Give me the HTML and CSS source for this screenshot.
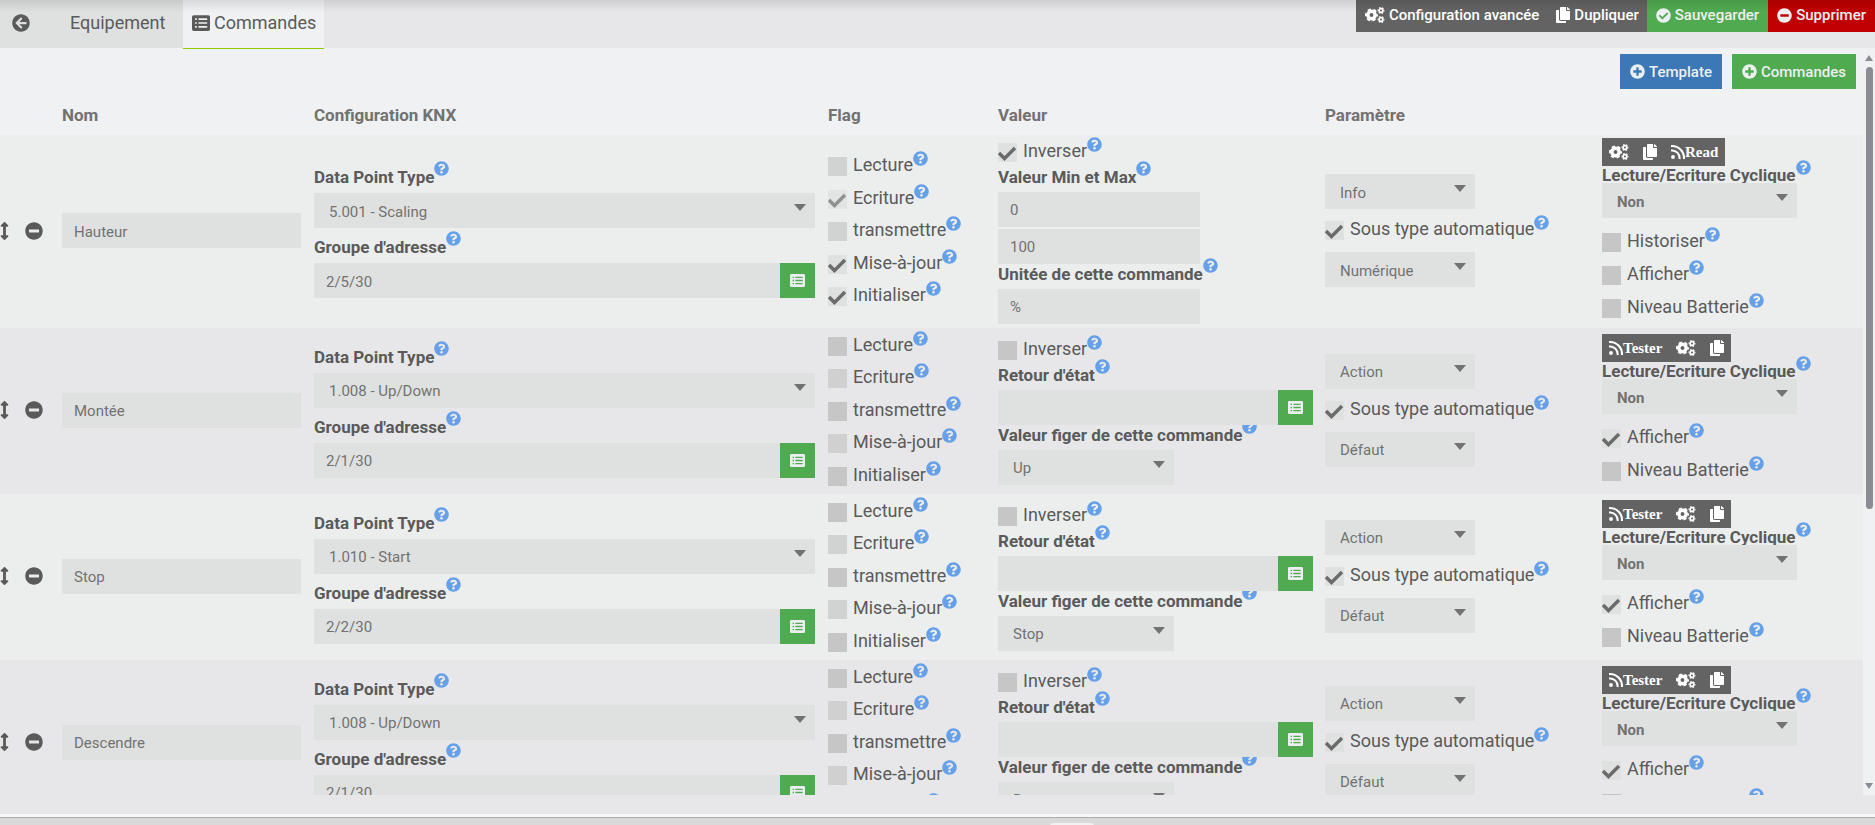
FILE: index.html
```
<!DOCTYPE html>
<html lang="fr">
<head>
    <meta charset="UTF-8">
    <meta name="viewport" content="width=device-width, initial-scale=1.0">
    <title>Commandes KNX</title>
    <link rel="stylesheet" href="styles.css">
</head>
<body>
    <svg class="sprite" aria-hidden="true">
        <symbol id="help" viewBox="0 0 512 512"><path d="M504 256c0 136.997-111.043 248-248 248S8 392.997 8 256C8 119.083 119.043 8 256 8s248 111.083 248 248zM262.655 90c-54.497 0-89.255 22.957-116.549 63.758-3.536 5.286-2.353 12.415 2.715 16.258l34.699 26.31c5.205 3.947 12.621 3.008 16.665-2.122 17.864-22.658 30.113-35.797 57.303-35.797 20.429 0 45.698 13.148 45.698 32.958 0 14.976-12.363 22.667-32.534 33.976C247.128 238.528 216 254.941 216 296v4c0 6.627 5.373 12 12 12h56c6.627 0 12-5.373 12-12v-1.333c0-28.462 83.186-29.647 83.186-106.667 0-58.002-60.165-102-116.531-102zM256 338c-25.365 0-46 20.635-46 46 0 25.364 20.635 46 46 46s46-20.636 46-46c0-25.365-20.635-46-46-46z"/></symbol>
        <symbol id="ok" viewBox="0 0 512 512"><path d="M504 256c0 136.967-111.033 248-248 248S8 392.967 8 256 119.033 8 256 8s248 111.033 248 248zM227.314 387.314l184-184c6.248-6.248 6.248-16.379 0-22.627l-22.627-22.627c-6.248-6.249-16.379-6.249-22.628 0L216 308.118l-70.059-70.059c-6.248-6.248-16.379-6.248-22.628 0l-22.627 22.627c-6.248 6.248-6.248 16.379 0 22.627l104 104c6.249 6.249 16.379 6.249 22.628.001z"/></symbol>
        <symbol id="minus" viewBox="0 0 512 512"><path d="M256 8C119 8 8 119 8 256s111 248 248 248 248-111 248-248S393 8 256 8zM124 296c-6.600 0-12-5.400-12-12v-56c0-6.600 5.400-12 12-12h264c6.600 0 12 5.400 12 12v56c0 6.600-5.400 12-12 12H124z"/></symbol>
        <symbol id="plus" viewBox="0 0 512 512"><path d="M256 8C119 8 8 119 8 256s111 248 248 248 248-111 248-248S393 8 256 8zm144 276c0 6.600-5.400 12-12 12h-92v92c0 6.600-5.400 12-12 12h-56c-6.600 0-12-5.400-12-12v-92h-92c-6.600 0-12-5.400-12-12v-56c0-6.600 5.400-12 12-12h92v-92c0-6.600 5.400-12 12-12h56c6.600 0 12 5.400 12 12v92h92c6.600 0 12 5.400 12 12v56z"/></symbol>
        <symbol id="back" viewBox="0 0 512 512"><path d="M256 504C119 504 8 393 8 256S119 8 256 8s248 111 248 248-111 248-248 248zm28.900-143.600L209.400 288H392c13.300 0 24-10.700 24-24v-16c0-13.300-10.700-24-24-24H209.400l75.500-72.400c9.700-9.300 9.900-24.800.4-34.300l-11-10.900c-9.400-9.400-24.600-9.400-33.900 0L107.700 239c-9.400 9.400-9.400 24.600 0 33.900l132.700 132.700c9.400 9.400 24.600 9.400 33.900 0l11-10.900c9.500-9.500 9.300-25-.4-34.300z"/></symbol>
        <symbol id="move" viewBox="0 0 256 512"><path d="M214.059 377.941H168V134.059h46.059c21.382 0 32.090-25.851 16.971-40.971L144.971 7.029c-9.373-9.373-24.568-9.373-33.941 0L24.971 93.088c-15.119 15.119-4.411 40.971 16.971 40.971H88v243.882H41.941c-21.382 0-32.090 25.851-16.971 40.971l86.059 86.059c9.373 9.373 24.568 9.373 33.941 0l86.059-86.059c15.120-15.119 4.412-40.971-16.970-40.971z"/></symbol>
        <symbol id="copy" viewBox="0 0 448 512"><path d="M320 448v40c0 13.255-10.745 24-24 24H24c-13.255 0-24-10.745-24-24V120c0-13.255 10.745-24 24-24h72v296c0 30.879 25.121 56 56 56h168zm0-344V0H152c-13.255 0-24 10.745-24 24v368c0 13.255 10.745 24 24 24h272c13.255 0 24-10.745 24-24V128H344c-13.200 0-24-10.800-24-24zm120.971-31.029L375.029 7.029A24 24 0 0 0 358.059 0H352v96h96v-6.059a24 24 0 0 0-7.029-16.970z"/></symbol>
        <symbol id="list" viewBox="0 0 512 512"><path fill-rule="evenodd" d="M48 32h416a48 48 0 0 1 48 48v352a48 48 0 0 1-48 48H48a48 48 0 0 1-48-48V80a48 48 0 0 1 48-48zM88 124v48h48v-48zM88 232v48h48v-48zM88 340v48h48v-48zM184 124v48h248v-48zM184 232v48h248v-48zM184 340v48h248v-48z"/></symbol>
        <symbol id="rss" viewBox="0 0 448 512"><circle cx="64" cy="416" r="62"/><path fill="none" stroke="currentColor" stroke-width="66" d="M0 208A240 240 0 0 1 272 480M0 66A382 382 0 0 1 414 480"/></symbol>
        <symbol id="cogs" viewBox="0 0 640 512">
            <g fill="none" stroke="currentColor">
                <circle cx="208" cy="256" r="118" stroke-width="110"/>
                <circle cx="208" cy="256" r="182" stroke-width="56" stroke-dasharray="104 86.600" stroke-dashoffset="52"/>
                <circle cx="512" cy="112" r="60" stroke-width="52"/>
                <circle cx="512" cy="112" r="94" stroke-width="34" stroke-dasharray="54 44.430" stroke-dashoffset="27"/>
                <circle cx="512" cy="400" r="60" stroke-width="52"/>
                <circle cx="512" cy="400" r="94" stroke-width="34" stroke-dasharray="54 44.430" stroke-dashoffset="27"/>
            </g>
        </symbol>
    </svg>

    <header class="topbar">
        <nav class="tabs">
            <a href="#" class="tab tab-back" aria-label="Retour"><svg class="icon18"><use href="#back"/></svg></a>
            <a href="#" class="tab tab-equip">Equipement</a>
            <a href="#" class="tab tab-cmd active"><svg class="icon18"><use href="#list"/></svg>Commandes</a>
        </nav>
        <div class="actions">
            <button type="button" class="btn btn-dark"><svg class="cogs"><use href="#cogs"/></svg>Configuration avancée</button>
            <button type="button" class="btn btn-dark"><svg class="copy"><use href="#copy"/></svg>Dupliquer</button>
            <button type="button" class="btn btn-green"><svg class="icon15"><use href="#ok"/></svg>Sauvegarder</button>
            <button type="button" class="btn btn-red"><svg class="icon15"><use href="#minus"/></svg>Supprimer</button>
        </div>
    </header>

    <main class="panel">
        <div class="content">
            <div class="add-bar">
                <button type="button" class="btn btn-blue"><svg class="icon15"><use href="#plus"/></svg>Template</button>
                <button type="button" class="btn btn-green"><svg class="icon15"><use href="#plus"/></svg>Commandes</button>
            </div>

            <table class="cmd-table">
                <thead>
                    <tr>
                        <th class="col-move"></th>
                        <th class="col-name">Nom</th>
                        <th>Configuration KNX</th>
                        <th class="col-flag">Flag</th>
                        <th class="col-value">Valeur</th>
                        <th class="col-param">Paramètre</th>
                        <th class="col-action"></th>
                    </tr>
                </thead>
                <tbody>
                    <!-- Hauteur -->
                    <tr>
                        <td class="move"><div class="handles"><svg class="arrows"><use href="#move"/></svg><svg class="icon18"><use href="#minus"/></svg></div></td>
                        <td class="name"><input type="text" class="field" value="Hauteur" aria-label="Nom"></td>
                        <td class="config">
                            <label class="title spaced" for="dpt1">Data Point Type<svg class="help"><use href="#help"/></svg></label>
                            <select class="field" id="dpt1"><option>5.001 - Scaling</option></select>
                            <label class="title spaced" for="ga1">Groupe d'adresse<svg class="help"><use href="#help"/></svg></label>
                            <div class="group"><input type="text" class="field" id="ga1" value="2/5/30"><button type="button" class="pick" aria-label="Choisir"><svg class="icon15"><use href="#list"/></svg></button></div>
                        </td>
                        <td>
                            <div class="flags">
                                <label class="check"><input type="checkbox" disabled>Lecture<svg class="help"><use href="#help"/></svg></label>
                                <label class="check"><input type="checkbox" checked disabled>Ecriture<svg class="help"><use href="#help"/></svg></label>
                                <label class="check"><input type="checkbox" disabled>transmettre<svg class="help"><use href="#help"/></svg></label>
                                <label class="check"><input type="checkbox" checked>Mise-à-jour<svg class="help"><use href="#help"/></svg></label>
                                <label class="check"><input type="checkbox" checked>Initialiser<svg class="help"><use href="#help"/></svg></label>
                            </div>
                        </td>
                        <td class="value">
                            <label class="check invert"><input type="checkbox" checked>Inverser<svg class="help"><use href="#help"/></svg></label>
                            <label class="title" for="min1">Valeur Min et Max<svg class="help"><use href="#help"/></svg></label>
                            <div class="range">
                                <input type="text" class="field short" id="min1" value="0">
                                <input type="text" class="field short" value="100" aria-label="Valeur Max">
                            </div>
                            <label class="title" for="unit1">Unitée de cette commande<svg class="help"><use href="#help"/></svg></label>
                            <input type="text" class="field short" id="unit1" value="%">
                        </td>
                        <td class="param">
                            <div class="params">
                                <select class="field type" aria-label="Type"><option>Info</option></select>
                                <label class="check"><input type="checkbox" checked>Sous type automatique<svg class="help"><use href="#help"/></svg></label>
                                <select class="field type" aria-label="Sous type"><option>Numérique</option></select>
                            </div>
                        </td>
                        <td>
                            <div class="tools">
                                <button type="button" class="tool" aria-label="Configurer"><svg class="cogs"><use href="#cogs"/></svg></button>
                                <button type="button" class="tool" aria-label="Dupliquer"><svg class="copy"><use href="#copy"/></svg></button>
                                <button type="button" class="tool"><svg class="copy"><use href="#rss"/></svg>Read</button>
                            </div>
                            <label class="title tight" for="cycle1">Lecture/Ecriture Cyclique<svg class="help"><use href="#help"/></svg></label>
                            <select class="field cycle" id="cycle1"><option>Non</option></select>
                            <div class="options">
                                <label class="check"><input type="checkbox">Historiser<svg class="help"><use href="#help"/></svg></label>
                                <label class="check"><input type="checkbox">Afficher<svg class="help"><use href="#help"/></svg></label>
                                <label class="check"><input type="checkbox">Niveau Batterie<svg class="help"><use href="#help"/></svg></label>
                            </div>
                        </td>
                    </tr>

                    <!-- Montée -->
                    <tr>
                        <td class="move"><div class="handles"><svg class="arrows"><use href="#move"/></svg><svg class="icon18"><use href="#minus"/></svg></div></td>
                        <td class="name"><input type="text" class="field" value="Montée" aria-label="Nom"></td>
                        <td class="config">
                            <label class="title spaced" for="dpt2">Data Point Type<svg class="help"><use href="#help"/></svg></label>
                            <select class="field" id="dpt2"><option>1.008 - Up/Down</option></select>
                            <label class="title spaced" for="ga2">Groupe d'adresse<svg class="help"><use href="#help"/></svg></label>
                            <div class="group"><input type="text" class="field" id="ga2" value="2/1/30"><button type="button" class="pick" aria-label="Choisir"><svg class="icon15"><use href="#list"/></svg></button></div>
                        </td>
                        <td>
                            <div class="flags">
                                <label class="check"><input type="checkbox">Lecture<svg class="help"><use href="#help"/></svg></label>
                                <label class="check"><input type="checkbox" disabled>Ecriture<svg class="help"><use href="#help"/></svg></label>
                                <label class="check"><input type="checkbox">transmettre<svg class="help"><use href="#help"/></svg></label>
                                <label class="check"><input type="checkbox" disabled>Mise-à-jour<svg class="help"><use href="#help"/></svg></label>
                                <label class="check"><input type="checkbox">Initialiser<svg class="help"><use href="#help"/></svg></label>
                            </div>
                        </td>
                        <td class="value">
                            <label class="check invert"><input type="checkbox">Inverser<svg class="help"><use href="#help"/></svg></label>
                            <label class="title" for="state2">Retour d'état<svg class="help"><use href="#help"/></svg></label>
                            <div class="group"><input type="text" class="field" id="state2"><button type="button" class="pick" aria-label="Choisir"><svg class="icon15"><use href="#list"/></svg></button></div>
                            <label class="title clipped" for="fixed2">Valeur figer de cette commande<svg class="help"><use href="#help"/></svg></label>
                            <select class="field fixed" id="fixed2"><option>Up</option></select>
                        </td>
                        <td class="param">
                            <div class="params">
                                <select class="field type" aria-label="Type"><option>Action</option></select>
                                <label class="check"><input type="checkbox" checked>Sous type automatique<svg class="help"><use href="#help"/></svg></label>
                                <select class="field type" aria-label="Sous type"><option>Défaut</option></select>
                            </div>
                        </td>
                        <td>
                            <div class="tools">
                                <button type="button" class="tool"><svg class="copy"><use href="#rss"/></svg>Tester</button>
                                <button type="button" class="tool" aria-label="Configurer"><svg class="cogs"><use href="#cogs"/></svg></button>
                                <button type="button" class="tool" aria-label="Dupliquer"><svg class="copy"><use href="#copy"/></svg></button>
                            </div>
                            <label class="title tight" for="cycle2">Lecture/Ecriture Cyclique<svg class="help"><use href="#help"/></svg></label>
                            <select class="field cycle" id="cycle2"><option>Non</option></select>
                            <div class="options">
                                <label class="check"><input type="checkbox" checked>Afficher<svg class="help"><use href="#help"/></svg></label>
                                <label class="check"><input type="checkbox">Niveau Batterie<svg class="help"><use href="#help"/></svg></label>
                            </div>
                        </td>
                    </tr>

                    <!-- Stop -->
                    <tr>
                        <td class="move"><div class="handles"><svg class="arrows"><use href="#move"/></svg><svg class="icon18"><use href="#minus"/></svg></div></td>
                        <td class="name"><input type="text" class="field" value="Stop" aria-label="Nom"></td>
                        <td class="config">
                            <label class="title spaced" for="dpt3">Data Point Type<svg class="help"><use href="#help"/></svg></label>
                            <select class="field" id="dpt3"><option>1.010 - Start</option></select>
                            <label class="title spaced" for="ga3">Groupe d'adresse<svg class="help"><use href="#help"/></svg></label>
                            <div class="group"><input type="text" class="field" id="ga3" value="2/2/30"><button type="button" class="pick" aria-label="Choisir"><svg class="icon15"><use href="#list"/></svg></button></div>
                        </td>
                        <td>
                            <div class="flags">
                                <label class="check"><input type="checkbox">Lecture<svg class="help"><use href="#help"/></svg></label>
                                <label class="check"><input type="checkbox" disabled>Ecriture<svg class="help"><use href="#help"/></svg></label>
                                <label class="check"><input type="checkbox">transmettre<svg class="help"><use href="#help"/></svg></label>
                                <label class="check"><input type="checkbox" disabled>Mise-à-jour<svg class="help"><use href="#help"/></svg></label>
                                <label class="check"><input type="checkbox">Initialiser<svg class="help"><use href="#help"/></svg></label>
                            </div>
                        </td>
                        <td class="value">
                            <label class="check invert"><input type="checkbox">Inverser<svg class="help"><use href="#help"/></svg></label>
                            <label class="title" for="state3">Retour d'état<svg class="help"><use href="#help"/></svg></label>
                            <div class="group"><input type="text" class="field" id="state3"><button type="button" class="pick" aria-label="Choisir"><svg class="icon15"><use href="#list"/></svg></button></div>
                            <label class="title clipped" for="fixed3">Valeur figer de cette commande<svg class="help"><use href="#help"/></svg></label>
                            <select class="field fixed" id="fixed3"><option>Stop</option></select>
                        </td>
                        <td class="param">
                            <div class="params">
                                <select class="field type" aria-label="Type"><option>Action</option></select>
                                <label class="check"><input type="checkbox" checked>Sous type automatique<svg class="help"><use href="#help"/></svg></label>
                                <select class="field type" aria-label="Sous type"><option>Défaut</option></select>
                            </div>
                        </td>
                        <td>
                            <div class="tools">
                                <button type="button" class="tool"><svg class="copy"><use href="#rss"/></svg>Tester</button>
                                <button type="button" class="tool" aria-label="Configurer"><svg class="cogs"><use href="#cogs"/></svg></button>
                                <button type="button" class="tool" aria-label="Dupliquer"><svg class="copy"><use href="#copy"/></svg></button>
                            </div>
                            <label class="title tight" for="cycle3">Lecture/Ecriture Cyclique<svg class="help"><use href="#help"/></svg></label>
                            <select class="field cycle" id="cycle3"><option>Non</option></select>
                            <div class="options">
                                <label class="check"><input type="checkbox" checked>Afficher<svg class="help"><use href="#help"/></svg></label>
                                <label class="check"><input type="checkbox">Niveau Batterie<svg class="help"><use href="#help"/></svg></label>
                            </div>
                        </td>
                    </tr>

                    <!-- Descendre -->
                    <tr>
                        <td class="move"><div class="handles"><svg class="arrows"><use href="#move"/></svg><svg class="icon18"><use href="#minus"/></svg></div></td>
                        <td class="name"><input type="text" class="field" value="Descendre" aria-label="Nom"></td>
                        <td class="config">
                            <label class="title spaced" for="dpt4">Data Point Type<svg class="help"><use href="#help"/></svg></label>
                            <select class="field" id="dpt4"><option>1.008 - Up/Down</option></select>
                            <label class="title spaced" for="ga4">Groupe d'adresse<svg class="help"><use href="#help"/></svg></label>
                            <div class="group"><input type="text" class="field" id="ga4" value="2/1/30"><button type="button" class="pick" aria-label="Choisir"><svg class="icon15"><use href="#list"/></svg></button></div>
                        </td>
                        <td>
                            <div class="flags">
                                <label class="check"><input type="checkbox">Lecture<svg class="help"><use href="#help"/></svg></label>
                                <label class="check"><input type="checkbox" disabled>Ecriture<svg class="help"><use href="#help"/></svg></label>
                                <label class="check"><input type="checkbox">transmettre<svg class="help"><use href="#help"/></svg></label>
                                <label class="check"><input type="checkbox" disabled>Mise-à-jour<svg class="help"><use href="#help"/></svg></label>
                                <label class="check"><input type="checkbox">Initialiser<svg class="help"><use href="#help"/></svg></label>
                            </div>
                        </td>
                        <td class="value">
                            <label class="check invert"><input type="checkbox">Inverser<svg class="help"><use href="#help"/></svg></label>
                            <label class="title" for="state4">Retour d'état<svg class="help"><use href="#help"/></svg></label>
                            <div class="group"><input type="text" class="field" id="state4"><button type="button" class="pick" aria-label="Choisir"><svg class="icon15"><use href="#list"/></svg></button></div>
                            <label class="title clipped" for="fixed4">Valeur figer de cette commande<svg class="help"><use href="#help"/></svg></label>
                            <select class="field fixed" id="fixed4"><option>Down</option></select>
                        </td>
                        <td class="param">
                            <div class="params">
                                <select class="field type" aria-label="Type"><option>Action</option></select>
                                <label class="check"><input type="checkbox" checked>Sous type automatique<svg class="help"><use href="#help"/></svg></label>
                                <select class="field type" aria-label="Sous type"><option>Défaut</option></select>
                            </div>
                        </td>
                        <td>
                            <div class="tools">
                                <button type="button" class="tool"><svg class="copy"><use href="#rss"/></svg>Tester</button>
                                <button type="button" class="tool" aria-label="Configurer"><svg class="cogs"><use href="#cogs"/></svg></button>
                                <button type="button" class="tool" aria-label="Dupliquer"><svg class="copy"><use href="#copy"/></svg></button>
                            </div>
                            <label class="title tight" for="cycle4">Lecture/Ecriture Cyclique<svg class="help"><use href="#help"/></svg></label>
                            <select class="field cycle" id="cycle4"><option>Non</option></select>
                            <div class="options">
                                <label class="check"><input type="checkbox" checked>Afficher<svg class="help"><use href="#help"/></svg></label>
                                <label class="check"><input type="checkbox">Niveau Batterie<svg class="help"><use href="#help"/></svg></label>
                            </div>
                        </td>
                    </tr>
                </tbody>
            </table>
        </div>
        <div class="scrollbar">
            <span class="arrow-up"></span>
            <span class="thumb"></span>
            <span class="arrow-down"></span>
        </div>
    </main>

    <footer class="bottom">
        <div class="taskbar"><span class="taskbar-item"></span></div>
    </footer>
</body>
</html>
```
FILE: styles.css
```
* {
    box-sizing: border-box;
}
body {
    margin: 0;
    height: 100vh;
    display: flex;
    flex-direction: column;
    overflow: hidden;
    font-family: Roboto, "Liberation Sans", sans-serif;
    font-size: 18px;
    color: #5a5a5a;
    background-color: #e7e7e9;
}
svg {
    fill: currentColor;
    flex: none;
    display: block;
}
.sprite {
    position: absolute;
    width: 0;
    height: 0;
}
.icon15 {
    width: 15px;
    height: 15px;
}
.icon18 {
    width: 18px;
    height: 18px;
}
.cogs {
    width: 20px;
    height: 16px;
}
.copy {
    width: 14px;
    height: 16px;
}

/* top bar */
.topbar {
    position: relative;
    height: 48px;
    flex: none;
    display: flex;
    justify-content: space-between;
    align-items: flex-start;
    background-image: linear-gradient(rgba(0,0,0,0.1), rgba(0,0,0,0) 12px);
}
.tabs {
    display: flex;
}
.tab {
    height: 48px;
    display: flex;
    align-items: center;
    gap: 4px;
    padding-bottom: 3px;
    color: #5a5a5a;
    text-decoration: none;
    background: linear-gradient(rgba(0,0,0,0.1), rgba(0,0,0,0) 12px) #dfe1e0;
}
.tab-back {
    padding-left: 12px;
    width: 48px;
}
.tab-equip {
    padding-left: 22px;
    width: 135px;
}
.tab-cmd {
    padding-left: 9px;
    padding-right: 8px;
}
.tab.active {
    height: 49px;
    border-bottom: 1px solid #94ca02;
    background-color: #eff1f3;
}
.actions {
    display: flex;
    height: 32px;
}
.btn {
    height: 100%;
    display: flex;
    align-items: center;
    gap: 4px;
    padding: 0 9px;
    border: none;
    color: #eceff1;
    font-family: inherit;
    font-size: 15px;
    font-weight: 500;
    cursor: pointer;
}
.actions .btn {
    padding-bottom: 2px;
    background-image: linear-gradient(rgba(0,0,0,0.1), rgba(0,0,0,0) 12px);
}
.btn-dark {
    padding-right: 8px;
    background-color: #636363;
    color: #fff;
}
.btn-green {
    background-color: #50aa50;
}
.btn-red {
    background-color: #c00000;
}
.btn-blue {
    background-color: #3b78b5;
}

/* scrolling panel */
.panel {
    flex: 1;
    min-height: 0;
    display: flex;
    overflow: hidden;
    background-color: #eff1f3;
}
.content {
    flex: 1;
}
.add-bar {
    height: 49px;
    display: flex;
    justify-content: flex-end;
    gap: 10px;
    padding: 6px 7px 8px;
}
.add-bar .btn {
    padding: 0 10px;
}
.scrollbar {
    width: 12px;
    display: flex;
    flex-direction: column;
    align-items: center;
    padding: 7px 0 6px;
}
.arrow-up, .arrow-down {
    border: 4px solid transparent;
    border-top: none;
    border-bottom: 6px solid #8b8b94;
}
.arrow-down {
    border-bottom: none;
    border-top: 6px solid #8b8b94;
    margin-top: auto;
}
.thumb {
    width: 7px;
    height: 442px;
    margin-top: 6px;
    border-radius: 4px;
    background-color: #8b8b94;
}

/* command table */
.cmd-table {
    width: 100%;
    table-layout: fixed;
    border-collapse: collapse;
}
th {
    height: 38px;
    padding: 0 6px 2px 7px;
    text-align: left;
    font-size: 17px;
    font-weight: bold;
    color: #727272;
}
.col-move {
    width: 55px;
}
.col-name {
    width: 252px;
}
.col-flag {
    width: 170px;
}
.col-value {
    width: 327px;
}
.col-param {
    width: 277px;
}
.col-action {
    width: 268px;
}
td {
    height: 166px;
    padding: 3px 6px 3px 7px;
    vertical-align: middle;
}
tbody tr {
    background-color: #e7e7e9;
}
tbody tr:nth-child(odd) {
    background-color: #eceeed;
}
td.move {
    padding: 0 0 2px;
}
td.name, td.param {
    padding-bottom: 5px;
}
td.config {
    padding-top: 0;
    padding-bottom: 7px;
}
td.value {
    padding-top: 6px;
    padding-right: 5px;
}
.handles {
    display: flex;
    align-items: center;
    gap: 16px;
}
.arrows {
    width: 9px;
    height: 18px;
}

/* fields */
.field {
    display: block;
    width: 100%;
    height: 35px;
    padding: 2px 12px 0;
    border: none;
    border-radius: 0;
    background-color: #dfe1e0;
    color: #727272;
    font-family: inherit;
    font-size: 15px;
}
select.field {
    appearance: none;
    padding-left: 15px;
    background-image: url("data:image/svg+xml,%3Csvg xmlns='http://www.w3.org/2000/svg' width='12' height='7'%3E%3Cpath d='M0 0h12L6 7z' fill='%23727272'/%3E%3C/svg%3E");
    background-repeat: no-repeat;
    background-position: right 9px top 11px;
}
.field.short {
    width: 202px;
}
.field.fixed {
    width: 176px;
}
.field.type {
    width: 150px;
}
.field.cycle {
    position: relative;
    width: 195px;
    font-weight: bold;
}
.group {
    display: flex;
}
.pick {
    width: 35px;
    height: 35px;
    flex: none;
    display: flex;
    align-items: center;
    justify-content: center;
    padding: 0;
    border: none;
    color: #eceff1;
    background-color: #50aa50;
}
.range {
    display: grid;
    gap: 2px;
}

/* labels and check boxes */
.title {
    display: flex;
    height: 25px;
    line-height: 20px;
    font-size: 17px;
    font-weight: bold;
    white-space: nowrap;
}
.title.spaced {
    height: 35px;
    padding-top: 9px;
}
.title.tight {
    height: 17px;
    line-height: 18px;
}
.title.clipped {
    overflow: hidden;
}
.help {
    width: 15px;
    height: 15px;
    margin-top: -6px;
    color: #65a0e8;
}
.check {
    display: flex;
    height: 19px;
    line-height: 15px;
    white-space: nowrap;
}
.check input {
    appearance: none;
    width: 19px;
    height: 19px;
    flex: none;
    margin: 0 6px 0 0;
    background-color: #c6c6c6;
}
.check input:checked {
    background: #dfe1e0 url("data:image/svg+xml,%3Csvg xmlns='http://www.w3.org/2000/svg' width='19' height='19'%3E%3Cpath d='M1 10l5.500 5.500L17 5' fill='none' stroke='%236b6b6b' stroke-width='3.400'/%3E%3C/svg%3E");
}
.check input:disabled {
    opacity: 0.7;
}
.flags {
    height: 149px;
    display: flex;
    flex-direction: column;
    justify-content: space-between;
}
.check.invert {
    height: 22px;
    margin-bottom: 2px;
}
.params {
    display: grid;
    gap: 12px;
}
.options {
    display: grid;
    gap: 14px;
    padding: 15px 0 7px;
}

/* command buttons */
.tools {
    width: max-content;
    height: 28px;
    display: flex;
    background-color: #636363;
}
.tool {
    display: flex;
    align-items: center;
    padding: 0 7px;
    border: none;
    background: none;
    color: #fff;
    font-family: "Liberation Serif", serif;
    font-size: 15px;
    font-weight: bold;
}

/* bottom edge */
.bottom {
    height: 30px;
    flex: none;
    padding-top: 19px;
}
.taskbar {
    height: 11px;
    border-top: 3px solid #f8f8f8;
    background-color: #d9d9d9;
    box-shadow: inset 0 1px #ababab;
    overflow: hidden;
}
.taskbar-item {
    display: block;
    width: 44px;
    height: 8px;
    margin: 6px 0 0 56%;
    border-radius: 3px;
    background-color: #f2f2f2;
}
```
